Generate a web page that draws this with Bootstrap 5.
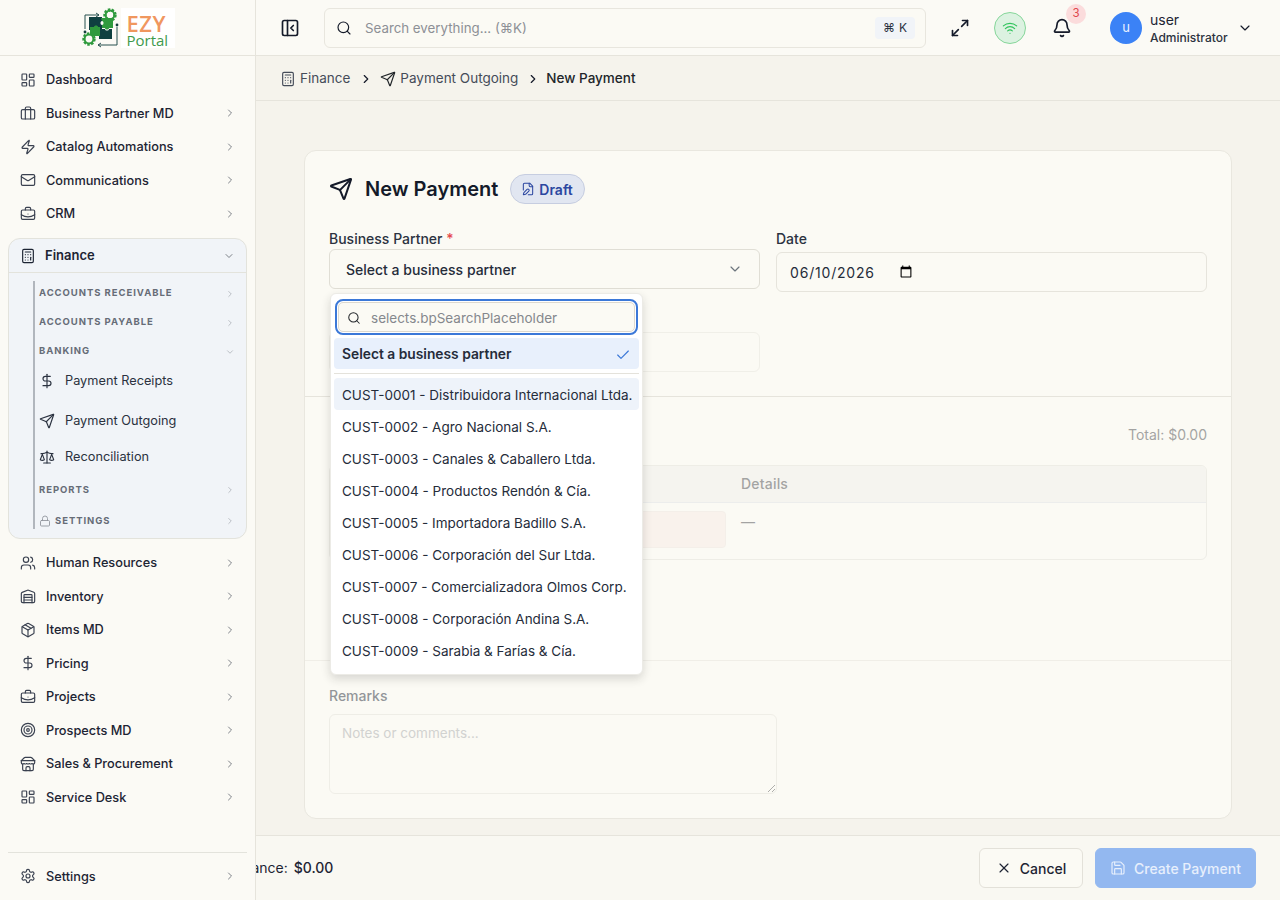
<!DOCTYPE html>
<html lang="en">
<head>
<meta charset="UTF-8">
<title>New Payment</title>
<link href="https://cdn.jsdelivr.net/npm/bootstrap@5.3.3/dist/css/bootstrap.min.css" rel="stylesheet">
<style>
    html, body { height: 100%; overflow: hidden; }
    body { font-family: Inter, "Liberation Sans", sans-serif; font-size: 13px; color: #1d2433; background: #f5f3ec; }
    .ico { width: 16px; height: 16px; fill: none; stroke: currentColor; stroke-width: 1.75; stroke-linecap: round; stroke-linejoin: round; flex: none; }
    .ico-lg { width: 20px; height: 20px; stroke-width: 2; color: #141a29; }
    .ico-sm { width: 14px; height: 14px; }

    .app-shell { height: 900px; }
    .side { width: 256px; flex: none; background: #fbfaf5; border-right: 1px solid #e6e4dc; position: relative; z-index: 5; }
    .side-logo { height: 56px; border-bottom: 1px solid #e6e4dc; }
    .logo-words { background: #fff; height: 40px; width: 54px; padding: 5px 0 0 6px; }
    .logo-ezy { color: #f0975f; font-size: 22px; font-weight: 600; line-height: 20px; letter-spacing: .5px; font-family: "Open Sans", sans-serif; }
    .logo-portal { color: #3f9a4c; font-size: 15px; line-height: 15px; font-family: "Open Sans", sans-serif; }
    .side-nav { padding: 7px 8px 0; }
    .nav-row { height: 33.5px; padding: 0 12px; color: #1d2433; gap: 10px; font-size: 12.75px; font-weight: 450; }
    .nav-row .chev { width: 12px; height: 12px; margin-left: auto; margin-right: -1px; color: #6b7078; }
    .nav-row .ico:first-child { color: #3a4150; }
    .fin-box { margin: 7.5px 0 7.4px; height: 300.5px; background: #f1f4f8; border: 1px solid #e3e3dc; border-radius: 12px; }
    .fin-head { height: 34px; border-bottom: 1px solid #e3e3dc; padding: 0 11px; gap: 9px; font-weight: 600; }
    .fin-head .chev { width: 12px; height: 12px; margin-left: auto; color: #6b7078; }
    .fin-tree { margin: 8px 0 0 24px; border-left: 2px solid #b1b6bd; height: 248px; padding-left: 4px; }
    .fin-sec { font-size: 9.5px; font-weight: 700; letter-spacing: .1em; color: #666c77; text-transform: uppercase; height: 29px; padding: 0 11px 4px 0; }
    .fin-sec .chev { width: 10px; height: 10px; margin-left: auto; color: #a7abb2; }
    .fin-sec-r { height: 34px; padding: 2px 11px 0 0; }
    .fin-sec-s { height: 23px; padding: 7px 11px 0 0; gap: 4px; }
    .fin-lock { width: 12px; height: 12px; color: #8f949c; }
    .fin-link { color: #2b3240; font-size: 12.75px; gap: 10px; padding-top: 2px; }
    .fin-link-a { height: 24px; }
    .fin-link-b { height: 40px; margin-top: 8px; }
    .fin-link-c { height: 32px; }
    .side-foot { position: absolute; left: 8px; right: 8px; bottom: 7px; border-top: 1px solid #e3e3dc; padding-top: 7px; }

    .top-bar { height: 56px; background: #fbfaf5; border-bottom: 1px solid #e6e4dc; padding: 0 20px 0 24px; }
    .search-box { width: 602px; height: 40px; margin-left: 24px; background: #fbfaf4; border: 1px solid #e8e6de; border-radius: 6px; padding: 0 10px 0 11px; color: #8d9096; font-size: 13.3px; }
    .search-ico { margin-right: 13px; color: #141a29; }
    .search-txt { padding-top: 2px; }
    .kbd-box { background: #f1f4f8; color: #2b3240; border-radius: 4px; padding: 0 8px; height: 22px; font-size: 12px; margin-left: auto; }
    .top-gap { margin-left: 24px; }
    .wifi-dot { width: 32px; height: 32px; border-radius: 50%; background: #dcf2e1; border: 1px solid #86d69a; color: #32c45d; }
    .bell-wrap { width: 20px; height: 20px; margin-left: 26px; }
    .bell-num { position: absolute; top: -14px; left: 14px; width: 20px; height: 20px; border-radius: 50%; background: #fbdcdc; color: #e0474c; font-size: 11.5px; }
    .user-dot { width: 32px; height: 32px; margin-left: 38px; border-radius: 50%; background: #3b82f6; color: #e9f1ff; font-size: 13px; }
    .user-info { padding-top: 2px; }
    .user-name { font-size: 14px; line-height: 18px; }
    .user-role { font-size: 12px; line-height: 16px; font-weight: 500; color: #2b3240; padding-top: 1px; }
    .user-chev { margin-left: 9px; color: #141a29; }
    .crumbs { height: 45px; background: #f5f3ec; border-bottom: 1px solid #e6e4dc; padding: 1px 24px 0; font-size: 13.5px; color: #454c59; }
    .crumb-sep-a { margin: 0 7px 0 9px; color: #141a29; stroke-width: 2; }
    .crumb-sep-b { margin: 0 6px 0 8px; color: #141a29; stroke-width: 2; }

    .work { padding: 49px 48px 0; flex: 1 1 auto; min-height: 0; }
    .pay-card { background: #fbfaf4; border: 1px solid #e9e7df; border-radius: 12px; height: 669px; --bs-card-bg: #fbfaf4; }
    .pay-sec { padding: 23px 24px 24px; border-bottom: 1px solid #e6e4dc; }
    .pay-sec-a { height: 246px; }
    .pay-sec-b { height: 265px; padding-top: 24px; }
    .pay-sec-c { padding: 24px 24px 24px; }
    .pay-head { height: 30px; margin-bottom: 24px; }
    .pay-ico { width: 24px; height: 24px; color: #141a29; stroke-width: 2; }
    .pay-title { font-size: 20px; font-weight: 600; color: #141a29; margin: 0 12px; }
    .draft-pill { height: 30px; padding: 0 11px 0 10px; background: #e1e6f1; border: 1px solid #c6cde0; border-radius: 15px; color: #2b46a0; font-size: 14px; font-weight: 600; gap: 4px; }
    .fld-label { font-size: 14px; font-weight: 500; color: #2b3240; margin-bottom: 1px; padding-top: 1px; line-height: 19px; }
    .fld-req { color: #e5484d; }
    .sel-btn { height: 40px; background: #fbfaf4; border: 1px solid #e0ded5; border-radius: 6px; padding: 0 16px; font-size: 14px; font-weight: 500; color: #252c3a; }
    .date-fld.form-control { height: 40px; margin-top: 4px; background: #fbfaf4; border: 1px solid #e6e4dc; border-radius: 6px; font-size: 14px; letter-spacing: .8px; font-family: inherit; color: #252c3a; padding: 0 13px; width: 100%; }
    .date-fld::-webkit-datetime-edit { flex: 0 0 auto; }
    .date-fld::-webkit-calendar-picker-indicator { margin-left: -11px; margin-right: auto; }
    .dim-part { opacity: .5; }
    .blank-fld { height: 40px; border: 1px solid #e6e4dc; border-radius: 6px; margin-top: 43px; }

    .picker { position: absolute; top: 65px; left: 9px; width: 313px; height: 382px; background: #fff; border-radius: 6px; border: 1px solid #ecebe6; box-shadow: 0 4px 10px rgba(30, 30, 30, .16); z-index: 4; padding: 5px 3px; }
    .picker-find { height: 36px; margin: 0 1px; border: 2px solid #3b78d8; border-radius: 8px; padding: 1px; }
    .picker-find > div { height: 100%; border: 1px solid #ddd9cf; background: #fbfaf4; border-radius: 5px; padding: 2px 8px 0; color: #85888d; font-size: 13.5px; gap: 10px; }
    .find-ico { width: 14px; height: 14px; }
    .pick-row { height: 32px; padding: 2px 8px 0; font-size: 13.5px; color: #252c3a; white-space: nowrap; border-radius: 4px; }
    .pick-on { height: 31px; margin-top: 3px; background: #e8f0fc; font-weight: 600; font-size: 13.8px; }
    .pick-check { color: #3b78d8; }
    .pick-rule { height: 1px; background: #e4e2db; margin: 4px 0; }
    .pick-hover { background: #eef3fa; }

    .pay-total { color: #4d4f52; font-size: 14px; line-height: 20px; padding-top: 4px; }
    .line-grid { margin-top: 20px; height: 95px; border: 1px solid #e3e2da; border-radius: 6px; overflow: hidden; color: #4d4f52; }
    .line-grid .table { --bs-table-bg: transparent; margin: 0; font-size: 14px; color: inherit; }
    .line-grid th { height: 36px; background: #f1f0ec; font-weight: 500; letter-spacing: .2px; padding: 0 12px; vertical-align: middle; }
    .line-grid th:first-child { width: 399px; }
    .line-grid td { padding: 8px 12px; height: 57px; border-bottom: 0; vertical-align: top; }
    .line-grid td:first-child { padding-right: 3px; }
    .pink-cell { height: 37px; background: #f9ece6; border: 1px solid #efe6e0; border-radius: 4px; }
    .note-fld.form-control { display: block; width: 448px; height: 80px; background: transparent; border: 1px solid #e3e2da; border-radius: 6px; padding: 8px 12px; font-size: 13.5px; margin-top: 9px; resize: vertical; }
    .note-fld::placeholder { color: #a9abad; }

    .foot-bar { height: 65px; background: #f9f8f2; border-top: 1px solid #e6e4dc; padding: 0 24px 1px; font-size: 14px; }
    .foot-sum { margin-left: -49px; }
    .foot-amt { margin-left: 2px; }
    .foot-btns { column-gap: 12px; }
    .btn-quit { height: 40px; width: 104px; background: #fbfaf4; border: 1px solid #e3e1d9; color: #1d2433; font-size: 14px; font-weight: 500; gap: 8px; padding: 1px 0 0; }
    .btn-make { height: 40px; width: 161px; background: #93b8f0; border: 1px solid #93b8f0; color: #e7effc; font-size: 14px; font-weight: 500; gap: 8px; padding: 1px 0 0; }
</style>
</head>
<body>

<svg width="0" height="0" class="position-absolute">
    <symbol id="i-dash" viewBox="0 0 24 24"><rect x="3" y="3" width="7" height="9" rx="1"/><rect x="14" y="3" width="7" height="5" rx="1"/><rect x="14" y="12" width="7" height="9" rx="1"/><rect x="3" y="16" width="7" height="5" rx="1"/></symbol>
    <symbol id="i-case" viewBox="0 0 24 24"><rect x="2" y="7" width="20" height="14" rx="2"/><path d="M8 21V5a2 2 0 0 1 2-2h4a2 2 0 0 1 2 2v16"/></symbol>
    <symbol id="i-zap" viewBox="0 0 24 24"><path d="M4 14a1 1 0 0 1-.78-1.63l9.9-10.2a.5.5 0 0 1 .86.46l-1.92 6.02A1 1 0 0 0 13 10h7a1 1 0 0 1 .78 1.63l-9.9 10.2a.5.5 0 0 1-.86-.46l1.92-6.02A1 1 0 0 0 11 14z"/></symbol>
    <symbol id="i-mail" viewBox="0 0 24 24"><rect x="2" y="4" width="20" height="16" rx="2"/><path d="m22 7-8.97 5.7a1.94 1.94 0 0 1-2.06 0L2 7"/></symbol>
    <symbol id="i-brief" viewBox="0 0 24 24"><path d="M12 12h.01"/><path d="M16 6V4a2 2 0 0 0-2-2h-4a2 2 0 0 0-2 2v2"/><path d="M22 13a18.15 18.15 0 0 1-20 0"/><rect x="2" y="6" width="20" height="14" rx="2"/></symbol>
    <symbol id="i-calc" viewBox="0 0 24 24"><rect x="4" y="2" width="16" height="20" rx="2"/><path d="M8 6h8"/><path d="M16 14v4"/><path d="M16 10h.01M12 10h.01M8 10h.01M12 14h.01M8 14h.01M12 18h.01M8 18h.01"/></symbol>
    <symbol id="i-dollar" viewBox="0 0 24 24"><path d="M12 2v20"/><path d="M17 5H9.5a3.5 3.5 0 0 0 0 7h5a3.5 3.5 0 0 1 0 7H6"/></symbol>
    <symbol id="i-send" viewBox="0 0 24 24"><path d="M14.536 21.686a.5.5 0 0 0 .937-.024l6.5-19a.496.496 0 0 0-.635-.635l-19 6.5a.5.5 0 0 0-.024.937l7.93 3.18a2 2 0 0 1 1.112 1.11z"/><path d="m21.854 2.147-10.94 10.939"/></symbol>
    <symbol id="i-scale" viewBox="0 0 24 24"><path d="m16 16 3-8 3 8c-.87.65-1.92 1-3 1s-2.13-.35-3-1Z"/><path d="m2 16 3-8 3 8c-.87.65-1.92 1-3 1s-2.13-.35-3-1Z"/><path d="M7 21h10"/><path d="M12 3v18"/><path d="M3 7h2c2 0 5-1 7-2 2 1 5 2 7 2h2"/></symbol>
    <symbol id="i-lock" viewBox="0 0 24 24"><rect x="3" y="11" width="18" height="11" rx="2"/><path d="M7 11V7a5 5 0 0 1 10 0v4"/></symbol>
    <symbol id="i-users" viewBox="0 0 24 24"><path d="M16 21v-2a4 4 0 0 0-4-4H6a4 4 0 0 0-4 4v2"/><circle cx="9" cy="7" r="4"/><path d="M22 21v-2a4 4 0 0 0-3-3.87"/><path d="M16 3.13a4 4 0 0 1 0 7.75"/></symbol>
    <symbol id="i-ware" viewBox="0 0 24 24"><path d="M22 8.35V20a2 2 0 0 1-2 2H4a2 2 0 0 1-2-2V8.35A2 2 0 0 1 3.26 6.5l8-3.2a2 2 0 0 1 1.48 0l8 3.2A2 2 0 0 1 22 8.35Z"/><path d="M6 18h12"/><path d="M6 14h12"/><path d="M6 22V11a1 1 0 0 1 1-1h10a1 1 0 0 1 1 1v11"/></symbol>
    <symbol id="i-box" viewBox="0 0 24 24"><path d="m7.5 4.27 9 5.15"/><path d="M21 8a2 2 0 0 0-1-1.73l-7-4a2 2 0 0 0-2 0l-7 4A2 2 0 0 0 3 8v8a2 2 0 0 0 1 1.73l7 4a2 2 0 0 0 2 0l7-4A2 2 0 0 0 21 16Z"/><path d="m3.3 7 8.7 5 8.7-5"/><path d="M12 22V12"/></symbol>
    <symbol id="i-target" viewBox="0 0 24 24"><circle cx="12" cy="12" r="10"/><circle cx="12" cy="12" r="6"/><circle cx="12" cy="12" r="2"/></symbol>
    <symbol id="i-store" viewBox="0 0 24 24"><path d="m2 7 4.41-4.41A2 2 0 0 1 7.83 2h8.34a2 2 0 0 1 1.42.59L22 7"/><path d="M4 12v8a2 2 0 0 0 2 2h12a2 2 0 0 0 2-2v-8"/><path d="M15 22v-4a2 2 0 0 0-2-2h-2a2 2 0 0 0-2 2v4"/><path d="M2 7h20"/><path d="M22 7v3a2 2 0 0 1-2 2a2.7 2.7 0 0 1-1.59-.63.7.7 0 0 0-.82 0A2.7 2.7 0 0 1 16 12a2.7 2.7 0 0 1-1.59-.63.7.7 0 0 0-.82 0A2.7 2.7 0 0 1 12 12a2.7 2.7 0 0 1-1.59-.63.7.7 0 0 0-.82 0A2.7 2.7 0 0 1 8 12a2.7 2.7 0 0 1-1.59-.63.7.7 0 0 0-.82 0A2.7 2.7 0 0 1 4 12a2 2 0 0 1-2-2V7"/></symbol>
    <symbol id="i-gear" viewBox="0 0 24 24"><path d="M12.22 2h-.44a2 2 0 0 0-2 2v.18a2 2 0 0 1-1 1.73l-.43.25a2 2 0 0 1-2 0l-.15-.08a2 2 0 0 0-2.73.73l-.22.38a2 2 0 0 0 .73 2.73l.15.1a2 2 0 0 1 1 1.72v.51a2 2 0 0 1-1 1.74l-.15.09a2 2 0 0 0-.73 2.73l.22.38a2 2 0 0 0 2.73.73l.15-.08a2 2 0 0 1 2 0l.43.25a2 2 0 0 1 1 1.73V20a2 2 0 0 0 2 2h.44a2 2 0 0 0 2-2v-.18a2 2 0 0 1 1-1.73l.43-.25a2 2 0 0 1 2 0l.15.08a2 2 0 0 0 2.73-.73l.22-.39a2 2 0 0 0-.73-2.73l-.15-.08a2 2 0 0 1-1-1.74v-.5a2 2 0 0 1 1-1.74l.15-.09a2 2 0 0 0 .73-2.73l-.22-.38a2 2 0 0 0-2.73-.73l-.15.08a2 2 0 0 1-2 0l-.43-.25a2 2 0 0 1-1-1.73V4a2 2 0 0 0-2-2z"/><circle cx="12" cy="12" r="3"/></symbol>
    <symbol id="i-panel" viewBox="0 0 24 24"><rect x="3" y="3" width="18" height="18" rx="2"/><path d="M9 3v18"/><path d="m16 15-3-3 3-3"/></symbol>
    <symbol id="i-search" viewBox="0 0 24 24"><circle cx="11" cy="11" r="8"/><path d="m21 21-4.3-4.3"/></symbol>
    <symbol id="i-expand" viewBox="0 0 24 24"><path d="M15 3h6v6"/><path d="m21 3-7 7"/><path d="m3 21 7-7"/><path d="M9 21H3v-6"/></symbol>
    <symbol id="i-wifi" viewBox="0 0 24 24"><path d="M12 20h.01"/><path d="M2 8.82a15 15 0 0 1 20 0"/><path d="M5 12.859a10 10 0 0 1 14 0"/><path d="M8.5 16.429a5 5 0 0 1 7 0"/></symbol>
    <symbol id="i-bell" viewBox="0 0 24 24"><path d="M10.268 21a2 2 0 0 0 3.464 0"/><path d="M3.262 15.326A1 1 0 0 0 4 17h16a1 1 0 0 0 .74-1.673C19.41 13.956 18 12.499 18 8A6 6 0 0 0 6 8c0 4.499-1.411 5.956-2.738 7.326"/></symbol>
    <symbol id="i-draft" viewBox="0 0 24 24"><path d="M12.5 22H18a2 2 0 0 0 2-2V7l-5-5H6a2 2 0 0 0-2 2v9.5"/><path d="M14 2v4a2 2 0 0 0 2 2h4"/><path d="M13.378 15.626a1 1 0 1 0-3.004-3.004l-5.01 5.012a2 2 0 0 0-.506.854l-.837 2.87a.5.5 0 0 0 .62.62l2.87-.837a2 2 0 0 0 .854-.506z"/></symbol>
    <symbol id="i-save" viewBox="0 0 24 24"><path d="M15.2 3a2 2 0 0 1 1.4.6l3.8 3.8a2 2 0 0 1 .6 1.4V19a2 2 0 0 1-2 2H5a2 2 0 0 1-2-2V5a2 2 0 0 1 2-2z"/><path d="M17 21v-7a1 1 0 0 0-1-1H8a1 1 0 0 0-1 1v7"/><path d="M7 3v4a1 1 0 0 0 1 1h7"/></symbol>
    <symbol id="i-x" viewBox="0 0 24 24"><path d="M18 6 6 18"/><path d="m6 6 12 12"/></symbol>
    <symbol id="i-check" viewBox="0 0 24 24"><path d="M20 6 9 17l-5-5"/></symbol>
    <symbol id="i-right" viewBox="0 0 24 24"><path d="m9 18 6-6-6-6"/></symbol>
    <symbol id="i-down" viewBox="0 0 24 24"><path d="m6 9 6 6 6-6"/></symbol>
</svg>

<div class="app-shell d-flex">

    <!-- sidebar -->
    <aside class="side d-flex flex-column">
        <div class="side-logo d-flex align-items-center justify-content-center">
            <div class="d-flex align-items-center">
                <svg width="40" height="40" viewBox="0 0 40 40">
                    <g fill="none" stroke="#27504f" stroke-width="1">
                        <path d="M18 7H4v14"/><path d="M36 19v18H17"/>
                        <path d="m15 5 3 2-3 2M20 35l-3 2 3 2"/>
                    </g>
                    <circle cx="4" cy="24" r="1.4" fill="#17403f"/>
                    <circle cx="36" cy="17" r="1.4" fill="#17403f"/>
                    <path d="M8 9h13v4c-2 0-2 4 0 4v5h-4c0-2-4-2-4 0H8z" fill="#0f4040"/>
                    <path d="M20 10h12v10h-4c0 2-4 2-4 0h-3v-3c2 0 2-4 0-4z" fill="#2f9a3d"/>
                    <path d="M18 21h6c0 2 4 2 4 0h3v10H18z" fill="#0f4040"/>
                    <path d="M9 19h4c0-2 4-2 4 0h2v9H9z" fill="#2f9a3d"/>
                    <circle cx="29" cy="7" r="5" fill="none" stroke="#2f9a3d" stroke-width="3.4" stroke-dasharray="2.2 1.3"/>
                    <circle cx="29" cy="7" r="4.4" fill="none" stroke="#2f9a3d" stroke-width="2"/>
                    <circle cx="8" cy="31" r="5" fill="none" stroke="#2f9a3d" stroke-width="3.4" stroke-dasharray="2.2 1.3"/>
                    <circle cx="8" cy="31" r="4.4" fill="#fbfaf5" stroke="#2f9a3d" stroke-width="2"/>
                </svg>
                <div class="logo-words d-flex flex-column">
                    <span class="logo-ezy">EZY</span>
                    <span class="logo-portal">Portal</span>
                </div>
            </div>
        </div>

        <nav class="side-nav">
            <div class="nav-row d-flex align-items-center"><svg class="ico"><use href="#i-dash"/></svg>Dashboard</div>
            <div class="nav-row d-flex align-items-center"><svg class="ico"><use href="#i-case"/></svg>Business Partner MD<svg class="ico chev"><use href="#i-right"/></svg></div>
            <div class="nav-row d-flex align-items-center"><svg class="ico"><use href="#i-zap"/></svg>Catalog Automations<svg class="ico chev"><use href="#i-right"/></svg></div>
            <div class="nav-row d-flex align-items-center"><svg class="ico"><use href="#i-mail"/></svg>Communications<svg class="ico chev"><use href="#i-right"/></svg></div>
            <div class="nav-row d-flex align-items-center"><svg class="ico"><use href="#i-brief"/></svg>CRM<svg class="ico chev"><use href="#i-right"/></svg></div>

            <div class="fin-box">
                <div class="fin-head d-flex align-items-center"><svg class="ico"><use href="#i-calc"/></svg>Finance<svg class="ico chev"><use href="#i-down"/></svg></div>
                <div class="fin-tree">
                    <div class="fin-sec d-flex align-items-center">Accounts Receivable<svg class="ico chev"><use href="#i-right"/></svg></div>
                    <div class="fin-sec d-flex align-items-center">Accounts Payable<svg class="ico chev"><use href="#i-right"/></svg></div>
                    <div class="fin-sec d-flex align-items-center">Banking<svg class="ico chev"><use href="#i-down"/></svg></div>
                    <div class="fin-link fin-link-a d-flex align-items-center"><svg class="ico"><use href="#i-dollar"/></svg>Payment Receipts</div>
                    <div class="fin-link fin-link-b d-flex align-items-center"><svg class="ico"><use href="#i-send"/></svg>Payment Outgoing</div>
                    <div class="fin-link fin-link-c d-flex align-items-center"><svg class="ico"><use href="#i-scale"/></svg>Reconciliation</div>
                    <div class="fin-sec fin-sec-r d-flex align-items-center">Reports<svg class="ico chev"><use href="#i-right"/></svg></div>
                    <div class="fin-sec fin-sec-s d-flex align-items-center"><svg class="ico fin-lock"><use href="#i-lock"/></svg>Settings<svg class="ico chev"><use href="#i-right"/></svg></div>
                </div>
            </div>

            <div class="nav-row d-flex align-items-center"><svg class="ico"><use href="#i-users"/></svg>Human Resources<svg class="ico chev"><use href="#i-right"/></svg></div>
            <div class="nav-row d-flex align-items-center"><svg class="ico"><use href="#i-ware"/></svg>Inventory<svg class="ico chev"><use href="#i-right"/></svg></div>
            <div class="nav-row d-flex align-items-center"><svg class="ico"><use href="#i-box"/></svg>Items MD<svg class="ico chev"><use href="#i-right"/></svg></div>
            <div class="nav-row d-flex align-items-center"><svg class="ico"><use href="#i-dollar"/></svg>Pricing<svg class="ico chev"><use href="#i-right"/></svg></div>
            <div class="nav-row d-flex align-items-center"><svg class="ico"><use href="#i-brief"/></svg>Projects<svg class="ico chev"><use href="#i-right"/></svg></div>
            <div class="nav-row d-flex align-items-center"><svg class="ico"><use href="#i-target"/></svg>Prospects MD<svg class="ico chev"><use href="#i-right"/></svg></div>
            <div class="nav-row d-flex align-items-center"><svg class="ico"><use href="#i-store"/></svg>Sales &amp; Procurement<svg class="ico chev"><use href="#i-right"/></svg></div>
            <div class="nav-row d-flex align-items-center"><svg class="ico"><use href="#i-dash"/></svg>Service Desk<svg class="ico chev"><use href="#i-right"/></svg></div>
        </nav>

        <div class="side-foot">
            <div class="nav-row d-flex align-items-center"><svg class="ico"><use href="#i-gear"/></svg>Settings<svg class="ico chev"><use href="#i-right"/></svg></div>
        </div>
    </aside>

    <!-- main column -->
    <div class="flex-grow-1 d-flex flex-column min-w-0 overflow-hidden">
        <header class="top-bar d-flex align-items-center">
            <svg class="ico ico-lg"><use href="#i-panel"/></svg>
            <div class="search-box d-flex align-items-center">
                <svg class="ico search-ico"><use href="#i-search"/></svg>
                <span class="search-txt">Search everything... (⌘K)</span>
                <span class="kbd-box d-flex align-items-center gap-1"><span>⌘</span><span>K</span></span>
            </div>
            <svg class="ico ico-lg top-gap"><use href="#i-expand"/></svg>
            <div class="wifi-dot top-gap d-flex align-items-center justify-content-center"><svg class="ico"><use href="#i-wifi"/></svg></div>
            <div class="bell-wrap position-relative">
                <svg class="ico ico-lg"><use href="#i-bell"/></svg>
                <span class="bell-num d-flex align-items-center justify-content-center">3</span>
            </div>
            <div class="user-dot d-flex align-items-center justify-content-center">u</div>
            <div class="user-info ms-2">
                <div class="user-name">user</div>
                <div class="user-role">Administrator</div>
            </div>
            <svg class="ico user-chev"><use href="#i-down"/></svg>
        </header>

        <div class="crumbs d-flex align-items-center">
            <svg class="ico"><use href="#i-calc"/></svg>
            <span class="ms-1">Finance</span>
            <svg class="ico ico-sm crumb-sep-a"><use href="#i-right"/></svg>
            <svg class="ico text-dark"><use href="#i-send"/></svg>
            <span class="ms-1">Payment Outgoing</span>
            <svg class="ico ico-sm crumb-sep-b"><use href="#i-right"/></svg>
            <span class="fw-medium text-dark">New Payment</span>
        </div>

        <main class="work">
            <div class="card pay-card">
                <div class="pay-sec pay-sec-a">
                    <div class="pay-head d-flex align-items-center">
                        <svg class="ico pay-ico"><use href="#i-send"/></svg>
                        <h1 class="pay-title">New Payment</h1>
                        <span class="draft-pill d-flex align-items-center"><svg class="ico ico-sm"><use href="#i-draft"/></svg>Draft</span>
                    </div>
                    <div class="row g-3">
                        <div class="col-6 position-relative">
                            <div class="fld-label">Business Partner <span class="fld-req">*</span></div>
                            <div class="sel-btn d-flex align-items-center justify-content-between">
                                <span>Select a business partner</span>
                                <svg class="ico text-secondary"><use href="#i-down"/></svg>
                            </div>
                            <div class="dim-part blank-fld"></div>

                            <div class="picker">
                                <div class="picker-find">
                                    <div class="d-flex align-items-center"><svg class="ico find-ico text-dark"><use href="#i-search"/></svg>selects.bpSearchPlaceholder</div>
                                </div>
                                <div class="pick-row pick-on d-flex align-items-center justify-content-between">
                                    <span>Select a business partner</span>
                                    <svg class="ico pick-check"><use href="#i-check"/></svg>
                                </div>
                                <div class="pick-rule"></div>
                                <div class="pick-row pick-hover d-flex align-items-center">CUST-0001 - Distribuidora Internacional Ltda.</div>
                                <div class="pick-row d-flex align-items-center">CUST-0002 - Agro Nacional S.A.</div>
                                <div class="pick-row d-flex align-items-center">CUST-0003 - Canales &amp; Caballero Ltda.</div>
                                <div class="pick-row d-flex align-items-center">CUST-0004 - Productos Rendón &amp; Cía.</div>
                                <div class="pick-row d-flex align-items-center">CUST-0005 - Importadora Badillo S.A.</div>
                                <div class="pick-row d-flex align-items-center">CUST-0006 - Corporación del Sur Ltda.</div>
                                <div class="pick-row d-flex align-items-center">CUST-0007 - Comercializadora Olmos Corp.</div>
                                <div class="pick-row d-flex align-items-center">CUST-0008 - Corporación Andina S.A.</div>
                                <div class="pick-row d-flex align-items-center">CUST-0009 - Sarabia &amp; Farías &amp; Cía.</div>
                            </div>
                        </div>
                        <div class="col-6">
                            <div class="fld-label">Date</div>
                            <input type="date" class="form-control date-fld" value="2026-06-10">
                        </div>
                    </div>
                </div>

                <div class="pay-sec pay-sec-b dim-part">
                    <div class="pay-total text-end">Total: $0.00</div>
                    <div class="line-grid">
                        <table class="table">
                            <thead><tr><th></th><th>Details</th></tr></thead>
                            <tbody><tr><td><div class="pink-cell"></div></td><td>—</td></tr></tbody>
                        </table>
                    </div>
                </div>

                <div class="pay-sec-c dim-part">
                    <div class="fld-label">Remarks</div>
                    <textarea class="form-control note-fld" placeholder="Notes or comments..."></textarea>
                </div>
            </div>
        </main>

        <footer class="foot-bar d-flex align-items-center">
            <div class="foot-sum"><span>Balance:</span> <span class="foot-amt fw-medium">$0.00</span></div>
            <div class="foot-btns ms-auto d-flex">
                <button class="btn btn-quit d-flex align-items-center justify-content-center"><svg class="ico"><use href="#i-x"/></svg>Cancel</button>
                <button class="btn btn-make d-flex align-items-center justify-content-center"><svg class="ico"><use href="#i-save"/></svg>Create Payment</button>
            </div>
        </footer>
    </div>
</div>

<script src="https://cdn.jsdelivr.net/npm/bootstrap@5.3.3/dist/js/bootstrap.bundle.min.js"></script>
</body>
</html>
